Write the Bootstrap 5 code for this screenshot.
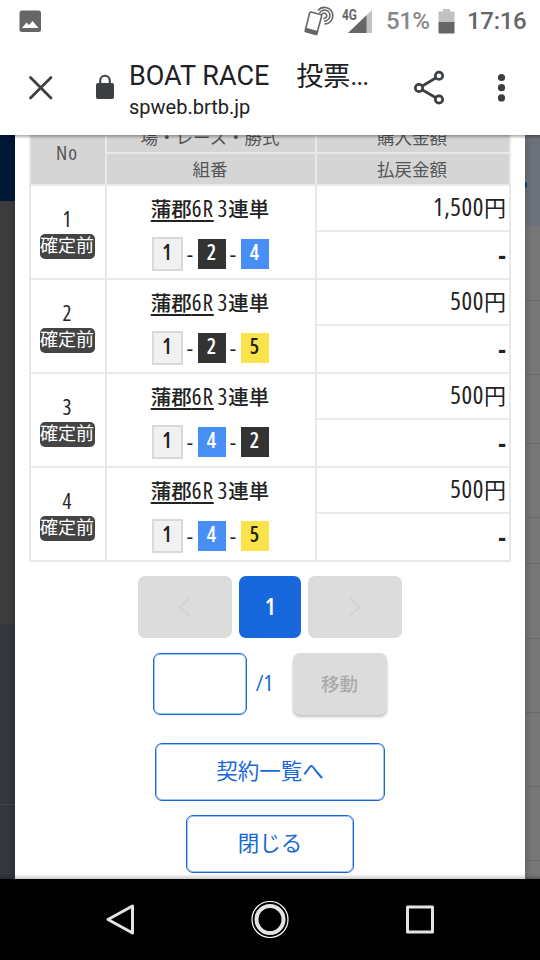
<!DOCTYPE html>
<html lang="ja">
<head>
<meta charset="utf-8">
<meta name="viewport" content="width=device-width, initial-scale=1">
<title>BOAT RACE 投票</title>
<link href="https://cdn.jsdelivr.net/npm/bootstrap@5.3.0/dist/css/bootstrap.min.css" rel="stylesheet">
<style>
body{font-family:"Open Sans","Noto Sans CJK JP",sans-serif;font-stretch:75%;width:540px;height:960px;overflow:hidden;color:#222;background:#fff}
svg{display:block;flex:none}
.status{height:40px;font-family:Roboto,sans-serif;font-stretch:100%;font-weight:500;font-size:24px;line-height:40px;padding:2px 14px 0 19px;color:#666}
.status .pct{margin-left:14px;color:#888;width:45px;letter-spacing:-.5px}
.status .batt{margin-left:7px}
.status .clock{margin-left:12px;width:59px;letter-spacing:-.3px}
.status .sig{margin-left:5px}
.appbar{height:95px;font-family:Roboto,"Noto Sans CJK JP",sans-serif;font-stretch:100%;color:#202124}
.ttl{font-size:27px;line-height:32px;white-space:pre;width:242px;margin-top:4px}
.ttl span{position:relative;top:1px}
.ttl i{font-style:normal;letter-spacing:-1.2px}
.url{font-size:20px;line-height:26px;margin-top:2px}
.stage{height:744px}
.edge-l{width:15px}.edge-l div:nth-child(1){height:66px;background:#001838}
.edge-l div:nth-child(2){height:423px;background:#3d3d3d}
.edge-l div:nth-child(3){height:181px;background:#33373e;border-bottom:1px solid #454443}
.edge-l div:nth-child(4){height:74px;background:#33373e}
.edge-r{width:15px}
.edge-r div{background:#777;border-bottom:1px solid #6a6a6a}
.edge-r .tint{background:#6d727a;border:0;height:91px;padding-top:47px}
.edge-r i{display:block;width:2px;height:6px;background:#0b3c84;border-radius:0 3px 3px 0}
.g1{height:75px}.g2{height:74px}.g3{height:69px}.g4{height:46px}.g5{height:18px}
.sheet{width:510px;background:#fff;box-shadow:0 0 8px rgba(0,0,0,.28);padding-left:14px;z-index:1}
.bets{width:482px;margin-top:-15px;table-layout:fixed;border-collapse:separate;border-spacing:0;border-right:2px solid #e8e8e8;border-bottom:2px solid #e8e8e8}
.bets th,.bets td{padding:0 2px 0 0;border-top:2px solid #e8e8e8;border-left:2px solid #e8e8e8;text-align:center;vertical-align:middle}
.bets th{background:#d5d5d5;color:#555;font-weight:400;font-size:17.5px;line-height:26px;height:32px}
.bets .hd-no{font-size:20px;letter-spacing:1px}
.bets .no{font-size:21px;line-height:23px;padding-top:2px}
.state{display:block;width:55px;height:25px;margin:3px auto 0;background:#444;color:#fff;border-radius:5px;font-size:18px;line-height:23px;white-space:nowrap}
.race{font-size:20.5px;line-height:30px;font-weight:500;height:30px;margin-top:0;white-space:nowrap}
.race b{font-size:23px;font-weight:500;letter-spacing:.9px}
.race u{text-underline-offset:3px;text-decoration-thickness:1.5px;text-decoration-skip-ink:none}
.combo{height:34px;margin-top:14px;font-size:21px;line-height:27px;font-weight:600}
.bt{width:28px;height:30px;color:#fff;background:#333}
.b1{width:31px;height:34px;line-height:27px;background:#f1f1f1;border:2px solid #d9d9d9;color:#222}
.b4{background:#488ff5}.b5{background:#fae24a;color:#222}
.sep{width:15px;font-weight:500;font-stretch:100%}
.bets .amt{height:46px;text-align:right;font-size:25px;letter-spacing:.6px;line-height:36px;padding-right:3px;padding-bottom:4px}
.amt small{font-size:22px;letter-spacing:0}
.bets .pay{height:48px;text-align:right;font-size:25px;line-height:36px;font-weight:700;padding-right:3px;padding-bottom:3px}
.pg{height:62px;border-radius:7px;padding:0;border:0}
.off{width:94px;background:#dcdcdc}
.cur{width:62px;background:#1668dc;color:#fff;font-size:24px;font-weight:600;line-height:60px;text-align:center}
.pageno{width:94px;height:62px;border-radius:7px;padding:0}
.pageno,.line-btn{border:1px solid #1668dc;box-shadow:inset 0 0 0 1px rgba(22,104,220,.4)}
.total{width:46px;padding-left:9px;color:#1668dc;font-size:22px;line-height:58px}
.go{background:#dcdcdc;color:#aaa;font-size:18.5px;line-height:58px;text-align:center;box-shadow:0 2px 3px rgba(0,0,0,.25);font-weight:500}
.line-btn{height:58px;border-radius:7px;color:#1668dc;font-size:21.5px;line-height:52px;padding:0 0 2px;background:#fff}
.w-list{width:230px}.w-close{width:168px}
.pager{gap:7px;width:482px;margin-top:14px}
.jump{width:482px;margin-top:15px;padding-right:1px}
.links{width:482px;gap:14px;margin-top:28px}
.cast-top{top:135px;height:4px;background:linear-gradient(rgba(0,0,0,.32),transparent);z-index:3}
.cast-bot{top:874px;height:5px;background:linear-gradient(transparent,rgba(0,0,0,.2));z-index:3}
.sysnav{height:81px;background:#000}
</style>
<script src="https://cdn.jsdelivr.net/npm/bootstrap@5.3.0/dist/js/bootstrap.bundle.min.js"></script>
</head>
<body class="position-relative d-flex flex-column">
<header class="status d-flex align-items-center">
  <svg width="23" height="23" viewBox="0 0 23 23"><rect x=".5" y=".5" width="21.5" height="21.5" rx="2.5" fill="#666"/><path d="M3 18 7.500 12.500 10 15 13.500 11 19.500 18Z" fill="#fff"/></svg>
  <svg class="ms-auto" width="30" height="30" viewBox="0 0 30 30" fill="none" stroke="#666" stroke-width="1.600"><path d="M7 6 16.500 8.500Q18 9 17.500 10.500L13 27Q12.500 28.500 11 28L2.500 25.500Q1 25 1.500 23.500L5.500 7.500Q6 5.800 7 6Z"/><path d="M2 22.500 13.500 25.700 12.500 28.500 1.300 25.500Z" fill="#666"/><path d="M14 4.500A8.300 8.300 0 1 1 20.500 18M15.500 7A5.500 5.500 0 1 1 20 15M17.500 9.500A2.600 2.600 0 1 1 19.500 12.300"/></svg>
  <svg class="sig" width="33" height="30" viewBox="0 0 33 30"><text x="3" y="14" font-family="Roboto" font-weight="700" font-size="14" fill="#666" textLength="15" lengthAdjust="spacingAndGlyphs">4G</text><path d="M33 4V27H9Z" fill="#c2c2c2"/><path d="M27.500 9.300V27H9Z" fill="#666"/></svg>
  <span class="pct">51%</span>
  <svg class="batt" width="17" height="26" viewBox="0 0 17 26"><path d="M5 1H12V3.500H16.500V14H.5V3.500H5Z" fill="#c2c2c2"/><path d="M.5 14H16.500V24.500Q16.500 25.500 15.500 25.500H1.500Q.5 25.500 .5 24.500Z" fill="#666"/></svg>
  <span class="clock">17:16</span>
</header>
<div class="appbar d-flex">
  <svg width="129" height="95" viewBox="0 0 129 95"><path d="M30.500 37.500 51 58M51 37.500 30.500 58" stroke="#3c4043" stroke-width="2.800" stroke-linecap="round"/><rect x="96" y="43" width="18" height="16" rx="2" fill="#3c4043"/><path d="M100.200 44V40.500a4.800 4.800 0 0 1 9.600 0V44" fill="none" stroke="#3c4043" stroke-width="2"/></svg>
  <div class="d-flex flex-column pt-3"><div class="ttl">BOAT RACE<span>　投票</span><i>...</i></div><div class="url">spweb.brtb.jp</div></div>
  <svg width="169" height="95" viewBox="0 0 169 95" fill="none" stroke="#3c4043" stroke-width="2.700"><path d="M48 48 68 36M48 48 68 59.500"/><g fill="#fff"><circle cx="48" cy="48" r="3.700"/><circle cx="68" cy="35.800" r="3.700"/><circle cx="68" cy="59.500" r="3.700"/></g><g fill="#3c4043" stroke="none"><circle cx="130.500" cy="37.500" r="3.600"/><circle cx="130.500" cy="47.700" r="3.600"/><circle cx="130.500" cy="57.900" r="3.600"/></g></svg>
</div>
<main class="stage d-flex overflow-hidden">
  <div class="edge-l"><div></div><div></div><div></div><div></div></div>
  <section class="sheet position-relative">
    <table class="bets">
      <colgroup><col style="width:76px"><col style="width:210px"><col></colgroup>
      <thead><tr><th rowspan="2" class="hd-no">No</th><th>場・レース・勝式</th><th>購入金額</th></tr><tr><th>組番</th><th>払戻金額</th></tr></thead>
      <tbody>
      <tr><td rowspan="2" class="no">1<span class="state">確定前</span></td><td rowspan="2"><div class="race"><u>蒲郡<b>6R</b></u> <b>3</b>連単</div><div class="combo d-flex justify-content-center align-items-center"><span class="bt b1">1</span><span class="sep">-</span><span class="bt">2</span><span class="sep">-</span><span class="bt b4">4</span></div></td><td class="amt">1,500<small>円</small></td></tr><tr><td class="pay">-</td></tr>
      <tr><td rowspan="2" class="no">2<span class="state">確定前</span></td><td rowspan="2"><div class="race"><u>蒲郡<b>6R</b></u> <b>3</b>連単</div><div class="combo d-flex justify-content-center align-items-center"><span class="bt b1">1</span><span class="sep">-</span><span class="bt">2</span><span class="sep">-</span><span class="bt b5">5</span></div></td><td class="amt">500<small>円</small></td></tr><tr><td class="pay">-</td></tr>
      <tr><td rowspan="2" class="no">3<span class="state">確定前</span></td><td rowspan="2"><div class="race"><u>蒲郡<b>6R</b></u> <b>3</b>連単</div><div class="combo d-flex justify-content-center align-items-center"><span class="bt b1">1</span><span class="sep">-</span><span class="bt b4">4</span><span class="sep">-</span><span class="bt">2</span></div></td><td class="amt">500<small>円</small></td></tr><tr><td class="pay">-</td></tr>
      <tr><td rowspan="2" class="no">4<span class="state">確定前</span></td><td rowspan="2"><div class="race"><u>蒲郡<b>6R</b></u> <b>3</b>連単</div><div class="combo d-flex justify-content-center align-items-center"><span class="bt b1">1</span><span class="sep">-</span><span class="bt b4">4</span><span class="sep">-</span><span class="bt b5">5</span></div></td><td class="amt">500<small>円</small></td></tr><tr><td class="pay">-</td></tr>
      </tbody>
    </table>
    <div class="pager d-flex justify-content-center">
      <button class="pg off d-flex align-items-center justify-content-center" aria-label="前へ"><svg width="12" height="20" viewBox="0 0 12 20" fill="none" stroke="#d0d0d0" stroke-width="1.600"><path d="M11 1 1 10 11 19"/></svg></button>
      <div class="pg cur">1</div>
      <button class="pg off d-flex align-items-center justify-content-center" aria-label="次へ"><svg width="12" height="20" viewBox="0 0 12 20" fill="none" stroke="#d0d0d0" stroke-width="1.600"><path d="M1 1 11 10 1 19"/></svg></button>
    </div>
    <div class="jump d-flex justify-content-center">
      <input class="pageno" aria-label="ページ"><span class="total">/1</span><button class="pg off go">移動</button>
    </div>
    <div class="links d-flex flex-column align-items-center"><button class="line-btn w-list">契約一覧へ</button><button class="line-btn w-close">閉じる</button></div>
  </section>
  <div class="edge-r"><div class="tint"><i></i></div><div class="g1"></div><div class="g2"></div><div class="g3"></div><div class="g2"></div><div class="g4"></div><div class="g1"></div><div class="g2"></div><div class="g2"></div><div class="g2"></div><div class="g5"></div></div>
</main>
<div class="cast-top position-absolute w-100"></div><div class="cast-bot position-absolute w-100"></div>
<nav class="sysnav"><svg width="540" height="81" viewBox="0 0 540 81" fill="none" stroke="#e3e3e3" stroke-width="3" stroke-linejoin="round"><path d="M108 40.500 132.500 27V54Z"/><circle cx="270" cy="40.500" r="13.500" stroke-width="4"/><circle cx="270" cy="40.500" r="18" stroke="#fff" stroke-width="1.200"/><rect x="407.500" y="28" width="25" height="25"/></svg></nav>
</body>
</html>
